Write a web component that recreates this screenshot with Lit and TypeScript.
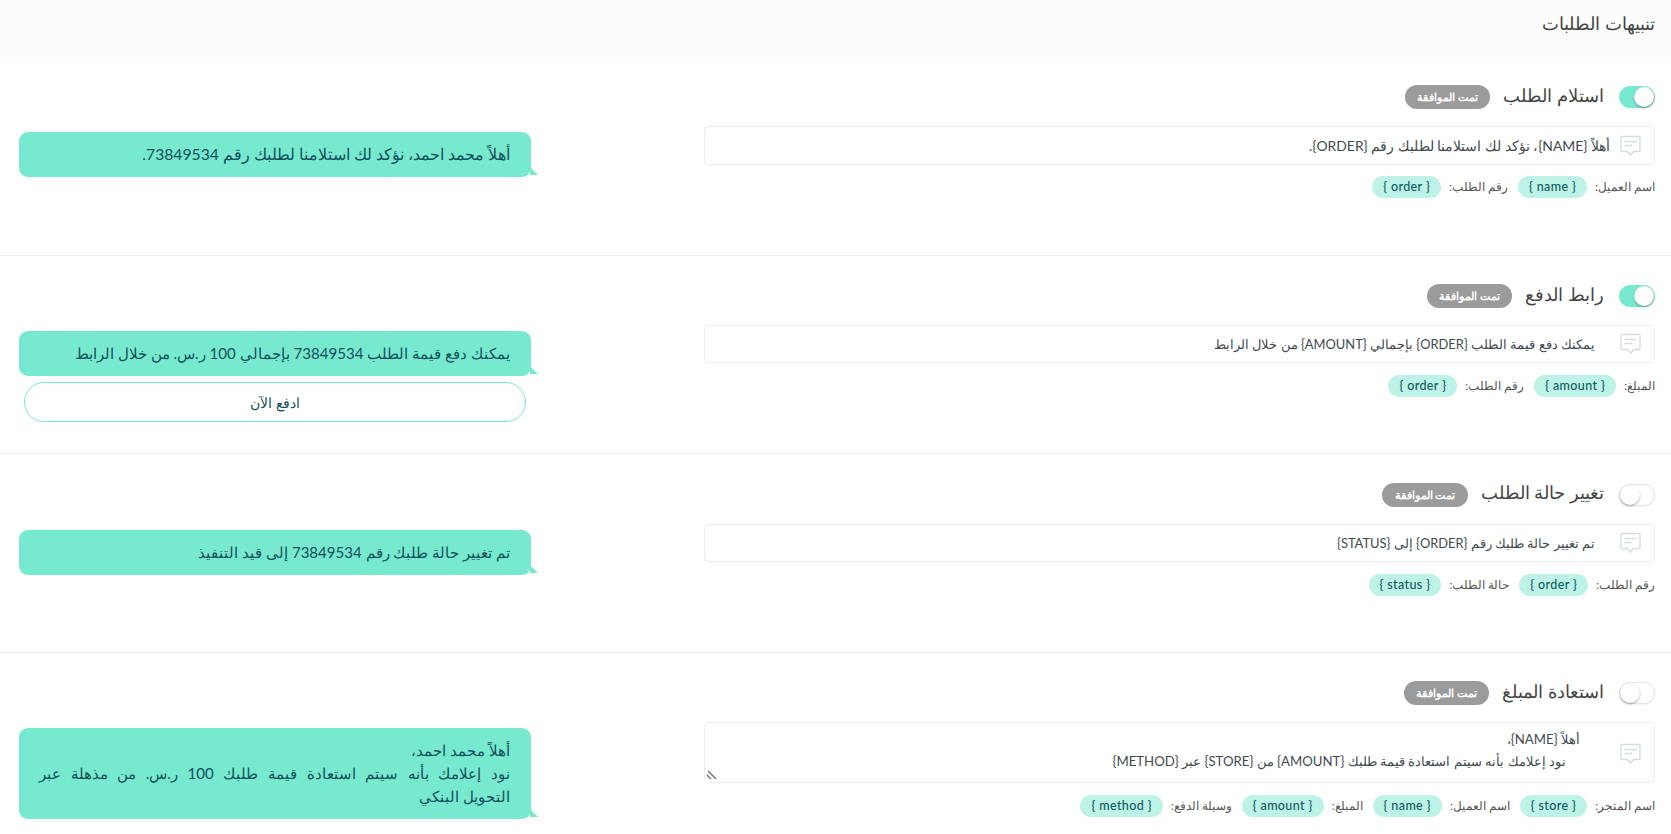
import { LitElement, html, css } from "lit";
import { customElement } from "lit/decorators.js";

interface Row {
  title: string;
  on: boolean;
  lines: { text: string; indent: number }[];
  boxSize: number;
  bubbleSize: number;
  chips: { label: string; key: string }[];
  bubble: string[];
  button?: string;
  handle?: boolean;
}

const rows: Row[] = [
  {
    title: "استلام الطلب",
    on: true,
    boxSize: 13.9,
    bubbleSize: 15.7,
    lines: [{ text: "أهلاً {NAME}، نؤكد لك استلامنا لطلبك رقم {ORDER}.", indent: 0 }],
    chips: [
      { label: "اسم العميل:", key: "{ name }" },
      { label: "رقم الطلب:", key: "{ order }" },
    ],
    bubble: ["أهلاً محمد احمد، نؤكد لك استلامنا لطلبك رقم 73849534."],
  },
  {
    title: "رابط الدفع",
    on: true,
    boxSize: 12.9,
    bubbleSize: 15.1,
    lines: [{ text: "يمكنك دفع قيمة الطلب {ORDER} بإجمالي {AMOUNT} من خلال الرابط", indent: 15 }],
    chips: [
      { label: "المبلغ:", key: "{ amount }" },
      { label: "رقم الطلب:", key: "{ order }" },
    ],
    bubble: ["يمكنك دفع قيمة الطلب 73849534 بإجمالي 100 ر.س. من خلال الرابط"],
    button: "ادفع الآن",
  },
  {
    title: "تغيير حالة الطلب",
    on: false,
    boxSize: 12.9,
    bubbleSize: 15.05,
    lines: [{ text: "تم تغيير حالة طلبك رقم {ORDER} إلى {STATUS}", indent: 15 }],
    chips: [
      { label: "رقم الطلب:", key: "{ order }" },
      { label: "حالة الطلب:", key: "{ status }" },
    ],
    bubble: ["تم تغيير حالة طلبك رقم 73849534 إلى قيد التنفيذ"],
  },
  {
    title: "استعادة المبلغ",
    on: false,
    boxSize: 13.2,
    bubbleSize: 15.1,
    lines: [
      { text: "أهلاً {NAME}،", indent: 30 },
      { text: "نود إعلامك بأنه سيتم استعادة قيمة طلبك {AMOUNT} من {STORE} عبر {METHOD}", indent: 44 },
    ],
    chips: [
      { label: "اسم المتجر:", key: "{ store }" },
      { label: "اسم العميل:", key: "{ name }" },
      { label: "المبلغ:", key: "{ amount }" },
      { label: "وسيلة الدفع:", key: "{ method }" },
    ],
    bubble: [
      "أهلاً محمد احمد،",
      "نود إعلامك بأنه سيتم استعادة قيمة طلبك 100 ر.س. من مذهلة عبر التحويل\u00a0البنكي",
    ],
    handle: true,
  },
];

@customElement("app-root")
export class AppRoot extends LitElement {
  static styles = css`
    :host {
      display: block;
      height: 834px;
      overflow: hidden;
      background: #fff;
      direction: rtl;
      font-family: "Lato", "Noto Sans", sans-serif;
      color: #3f4a50;
    }
    .head {
      height: 57px;
      background: #fcfcfc;
      padding: 11px 16px 0;
      box-sizing: border-box;
      font-size: 18px;
      line-height: 24px;
      color: #444;
    }
    .sec {
      height: 198.7px;
      box-sizing: border-box;
      border-bottom: 1px solid #ececec;
      padding: 28.4px 16px 0;
      display: grid;
      grid-template-columns: 951px 1fr;
    }
    .sec:last-child {
      border-bottom: 0;
    }
    .title-row {
      display: flex;
      align-items: center;
      height: 24px;
    }
    .toggle {
      width: 36px;
      height: 22px;
      border-radius: 11px;
      box-sizing: border-box;
      border: 1px solid #e4e4e4;
      background: #fff;
      box-shadow: 0 1px 2px rgba(0, 0, 0, 0.06);
      display: flex;
      justify-content: flex-end;
      margin-inline-end: 15px;
    }
    .toggle.on {
      background: #76e9cf;
      border-color: #76e9cf;
      justify-content: flex-start;
    }
    .knob {
      width: 20px;
      height: 20px;
      border-radius: 50%;
      background: #fff;
      box-shadow: 0 1px 2px rgba(0, 0, 0, 0.35);
    }
    .title {
      font-size: 18px;
      color: #444;
      line-height: 24px;
      padding-bottom: 5px;
    }
    .badge {
      margin-inline-start: 13px;
      background: #9b9b9b;
      color: #fff;
      font-size: 11.2px;
      font-weight: 700;
      height: 24px;
      line-height: 24px;
      padding: 0 12.5px;
      border-radius: 12px;
    }
    .box {
      position: relative;
      margin-top: 17px;
      box-sizing: border-box;
      height: 38.4px;
      border: 1px solid #ececec;
      border-radius: 4px;
      display: flex;
      align-items: center;
      padding: 0 13px 0 0;
      line-height: 22px;
      color: #3f4a50;
    }
    .box.tall {
      height: 61px;
      padding-top: 6px;
      align-items: flex-start;
      line-height: 21.5px;
    }
    .box svg.ic {
      flex: none;
      margin-left: 10px;
    }
    .box.tall svg.ic {
      margin-top: 14px;
    }
    .line {
      display: block;
    }
    .handle {
      position: absolute;
      left: 1px;
      bottom: 1px;
    }
    .chips {
      display: flex;
      align-items: center;
      margin-top: 11.5px;
      font-size: 11.5px;
      color: #555;
    }
    .chip {
      background: #bcf3e6;
      color: #0e5a60;
      border-radius: 11px;
      height: 22px;
      line-height: 22px;
      padding: 0 11px;
      margin: 0 8px 0 10px;
      font-weight: 500;
      letter-spacing: 0.4px;
      font-size: 12.5px;
      direction: ltr;
    }
    .left {
      display: flex;
      flex-direction: column;
      align-items: flex-end;
      padding-top: 47px;
    }
    .wrap {
      width: 512px;
      margin-left: 3px;
    }
    .bubble {
      position: relative;
      background: #76e9cf;
      color: #12505a;
      border-radius: 9px;
      padding: 11px 21px 11px 20px;
      line-height: 23px;
      text-align: justify;
    }
    .bubble p {
      margin: 0;
    }
    .bubble::after {
      content: "";
      position: absolute;
      left: 100%;
      margin-left: -1px;
      bottom: 2px;
      width: 0;
      height: 0;
      border-bottom: 8px solid #76e9cf;
      border-right: 8px solid transparent;
    }
    .btn {
      margin: 6px 5px 0;
      height: 40px;
      box-sizing: border-box;
      border: 1px solid #76e9cf;
      border-radius: 20px;
      display: flex;
      align-items: center;
      justify-content: center;
      font-size: 14px;
      color: #12505a;
    }
  `;

  private icon() {
    return html`<svg class="ic" width="21" height="22" viewBox="0 0 21 22" fill="none" stroke="#d6dde0" stroke-width="1.4" stroke-linejoin="round">
      <path d="M2.5 1.5h16a1.5 1.5 0 0 1 1.5 1.5v12a1.5 1.5 0 0 1-1.5 1.5h-5l-3 3.5-3-3.5h-5A1.5 1.5 0 0 1 1 15V3a1.5 1.5 0 0 1 1.5-1.5z" />
      <path d="M5 6.5h11M5 10.5h7" stroke-linecap="round" />
    </svg>`;
  }

  render() {
    return html`
      <div class="head">تنبيهات الطلبات</div>
      ${rows.map(
        (r) => html`
          <section class="sec">
            <div>
              <div class="title-row">
                <span class="toggle ${r.on ? "on" : ""}"><span class="knob"></span></span>
                <span class="title">${r.title}</span>
                <span class="badge">تمت الموافقة</span>
              </div>
              <div class="box ${r.handle ? "tall" : ""}" style="font-size:${r.boxSize}px">
                ${this.icon()}
                <div>
                  ${r.lines.map(
                    (l) => html`<span class="line" style="padding-inline-start:${l.indent}px">${l.text}</span>`
                  )}
                </div>
                ${r.handle
                  ? html`<svg class="handle" width="11" height="11" viewBox="0 0 11 11" stroke="#666" stroke-width="1.2">
                      <path d="M2 1l8 8M1 5l4 4" />
                    </svg>`
                  : ""}
              </div>
              <div class="chips">
                ${r.chips.map(
                  (c) => html`<span>${c.label}</span><span class="chip">${c.key}</span>`
                )}
              </div>
            </div>
            <div class="left">
              <div class="wrap">
                <div class="bubble" style="font-size:${r.bubbleSize}px">${r.bubble.map((b) => html`<p>${b}</p>`)}</div>
                ${r.button ? html`<div class="btn">${r.button}</div>` : ""}
              </div>
            </div>
          </section>
        `
      )}
    `;
  }
}
